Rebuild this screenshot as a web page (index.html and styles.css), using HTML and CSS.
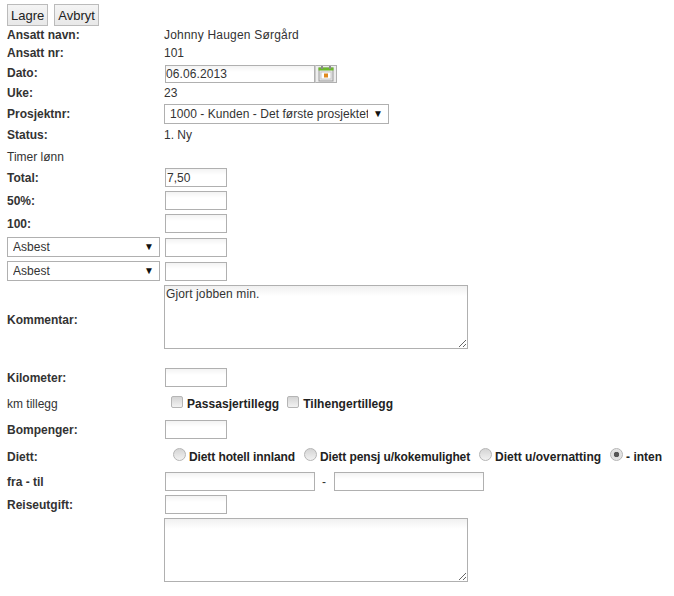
FILE: index.html
```html
<!DOCTYPE html>
<html lang="no">
<head>
<meta charset="utf-8">
<title>Timer</title>
<link rel="stylesheet" href="styles.css">
</head>
<body>
<form class="form">
  <div class="buttons">
    <button type="button" class="btn">Lagre</button>
    <button type="button" class="btn">Avbryt</button>
  </div>
  <div class="row h18"><b class="label">Ansatt navn:</b><span class="name">Johnny Haugen Sørgård</span></div>
  <div class="row h18"><b class="label">Ansatt nr:</b><span>101</span></div>
  <div class="row h21"><b class="label">Dato:</b>
    <div class="date">
      <input class="field w150 short" type="text" value="06.06.2013">
      <span class="cal"><svg width="16" height="16" viewBox="0 0 16 16">
        <rect x="1" y="2" width="14" height="13" fill="#e8e8e8" stroke="#999"/>
        <rect x="0.5" y="1.5" width="15" height="3" fill="#6cb82c"/>
        <rect x="3" y="0" width="2" height="3" fill="#8a8a8a"/>
        <rect x="11" y="0" width="2" height="3" fill="#8a8a8a"/>
        <rect x="3" y="6" width="10" height="7" fill="#fff" stroke="#c8c8c8"/>
        <rect x="6" y="7.5" width="4" height="4" fill="#e08a1e"/>
      </svg></span>
    </div>
  </div>
  <div class="row h19"><b class="label">Uke:</b><span>23</span></div>
  <div class="row h24"><b class="label">Prosjektnr:</b>
    <span class="selectwrap"><select class="sel w225"><option>1000 - Kunden - Det første prosjektet</option></select></span>
  </div>
  <div class="row h18"><b class="label">Status:</b><span>1. Ny</span></div>
  <div class="row h22 section"><span class="label">Timer lønn</span></div>
  <div class="row h23"><b class="label">Total:</b><input class="field w62" type="text" value="7,50"></div>
  <div class="row h23"><b class="label">50%:</b><input class="field w62" type="text"></div>
  <div class="row h23"><b class="label">100:</b><input class="field w62" type="text"></div>
  <div class="row h24"><span class="selectwrap"><select class="sel w153"><option>Asbest</option></select></span><input class="field w62" type="text"></div>
  <div class="row h24"><span class="selectwrap"><select class="sel w153"><option>Asbest</option></select></span><input class="field w62" type="text"></div>
  <div class="row h83"><b class="label">Kommentar:</b><textarea class="area">Gjort jobben min.</textarea></div>
  <div class="row h23"><b class="label">Kilometer:</b><input class="field w62" type="text"></div>
  <div class="row h29"><span class="label">km tillegg</span>
    <div class="opts checks">
      <label class="opt"><input class="check" type="checkbox"><b>Passasjertillegg</b></label>
      <label class="opt"><input class="check" type="checkbox"><b>Tilhengertillegg</b></label>
    </div>
  </div>
  <div class="row h23"><b class="label">Bompenger:</b><input class="field w62" type="text"></div>
  <div class="row h29 diett"><b class="label">Diett:</b>
    <div class="opts radios">
      <label class="opt"><input class="radio" type="radio" name="d"><b>Diett hotell innland</b></label>
      <label class="opt"><input class="radio" type="radio" name="d"><b>Diett pensj u/kokemulighet</b></label>
      <label class="opt"><input class="radio" type="radio" name="d"><b>Diett u/overnatting</b></label>
      <label class="opt"><input class="radio" type="radio" name="d" checked><b>- inten</b></label>
    </div>
  </div>
  <div class="row h23"><b class="label">fra - til</b>
    <div class="range"><input class="field w150" type="text"><span>-</span><input class="field w150" type="text"></div>
  </div>
  <div class="row h23"><b class="label">Reiseutgift:</b><input class="field w62" type="text"></div>
  <div class="row h66"><span></span><textarea class="area"></textarea></div>
</form>
</body>
</html>
```

FILE: styles.css
```css
* { box-sizing: border-box; }
html, body { margin: 0; padding: 0; background: #fff; }
body {
  font-family: "Liberation Sans", Arial, sans-serif;
  font-size: 12px;
  color: #333;
}
.form { display: flex; flex-direction: column; padding: 4px 0 0 7px; }
.buttons { display: flex; gap: 6px; height: 22px; }
.btn {
  height: 22px;
  margin: 0;
  padding: 0 3px;
  border: 1px solid #bbb;
  border-radius: 0;
  background: linear-gradient(#f4f4f4, #e8e8e8);
  font: 13px "Liberation Sans", Arial, sans-serif;
  color: #222;
}
.row { display: grid; grid-template-columns: 157px 1fr; align-items: center; }
.label { display: block; }
.name { letter-spacing: 0.2px; }
.h18 { height: 18px; }
.h19 { height: 19px; }
.h21 { height: 21px; }
.h22 { height: 22px; }
.h23 { height: 23px; }
.h24 { height: 24px; }
.h29 { height: 29px; }
.h66 { height: 66px; align-items: start; padding-top: 2px; }
.h83 { height: 83px; align-items: start; padding-top: 2px; }
.h83 .label { margin-top: 28px; }
.section { padding-top: 3px; }
.diett { padding-top: 2px; }
.field {
  display: block;
  height: 19px;
  margin: 0 0 0 1px;
  padding: 0 1px;
  border: 1px solid #b0b0b0;
  border-radius: 0;
  background: linear-gradient(#f3f3f3, #fff 6px);
  font: 12px "Liberation Sans", Arial, sans-serif;
  color: #333;
  outline: none;
}
.short { height: 18px; padding: 0; letter-spacing: 0.1px; }
.w62 { width: 62px; }
.w150 { width: 150px; }
.date { display: flex; align-items: center; padding-top: 2px; }
.cal {
  display: flex;
  align-items: center;
  justify-content: center;
  width: 22px;
  height: 18px;
  border: 1px solid #b0b0b0;
  border-left: 1px solid #ccc;
  background: #eee;
}
.selectwrap { position: relative; display: block; width: max-content; }
.selectwrap::after {
  content: "▼";
  position: absolute;
  right: 6px;
  top: 4px;
  font-size: 10px;
  color: #111;
  pointer-events: none;
}
.sel {
  display: block;
  height: 20px;
  margin: 0;
  padding: 0 20px 0 5px;
  border: 1px solid #b0b0b0;
  border-radius: 0;
  appearance: none;
  background: #fff;
  font: 12px "Liberation Sans", Arial, sans-serif;
  letter-spacing: 0.05px;
  color: #333;
}
.w225 { width: 225px; }
.w153 { width: 153px; }
.area {
  display: block;
  width: 304px;
  height: 64px;
  margin: 0;
  padding: 1px;
  border: 1px solid #b0b0b0;
  border-radius: 0;
  background: linear-gradient(#f0f0f0, #fff 10px);
  font: 12px "Liberation Sans", Arial, sans-serif;
  letter-spacing: 0.12px;
  color: #333;
  outline: none;
}
.opts { display: flex; align-items: center; color: #222; }
.checks { gap: 8px; padding-left: 7px; }
.checks b { letter-spacing: 0.05px; }
.radios { gap: 9px; padding-left: 9px; white-space: nowrap; }
.radios .opt:nth-child(-n+2) b { letter-spacing: -0.1px; }
.opt { display: flex; align-items: center; gap: 4px; }
.radios .opt { gap: 3px; }
.check, .radio {
  appearance: none;
  display: block;
  margin: 0;
  background: linear-gradient(#d4d4d4, #f2f2f2);
  border: 1px solid #b5b5b5;
}
.check { width: 12px; height: 12px; border-radius: 2px; position: relative; top: -2px; }
.radio { width: 13px; height: 13px; border-radius: 50%; position: relative; top: -2px; }
.radio:checked { background: radial-gradient(circle, #555 0 2.5px, #ddd 3px, #eee 100%); }
.range { display: flex; align-items: center; }
.range span { width: 18px; text-align: center; }
```
